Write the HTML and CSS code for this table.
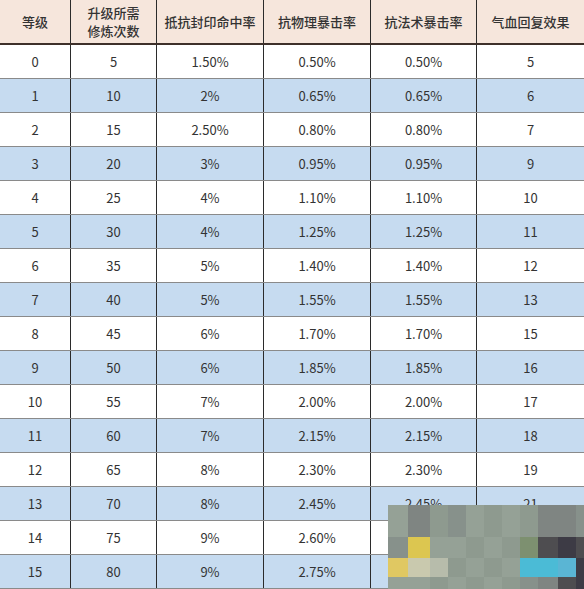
FILE: index.html
```html
<!DOCTYPE html>
<html lang="zh">
<head>
<meta charset="utf-8">
<link rel="stylesheet" href="styles.css">
</head>
<body>
<div class="table">
  <div class="row head">
    <div class="cell">等级</div>
    <div class="cell">升级所需<br>修炼次数</div>
    <div class="cell">抵抗封印命中率</div>
    <div class="cell">抗物理暴击率</div>
    <div class="cell">抗法术暴击率</div>
    <div class="cell">气血回复效果</div>
  </div>
  <div class="row"><div class="cell">0</div><div class="cell">5</div><div class="cell">1.50%</div><div class="cell">0.50%</div><div class="cell">0.50%</div><div class="cell">5</div></div>
  <div class="row alt"><div class="cell">1</div><div class="cell">10</div><div class="cell">2%</div><div class="cell">0.65%</div><div class="cell">0.65%</div><div class="cell">6</div></div>
  <div class="row"><div class="cell">2</div><div class="cell">15</div><div class="cell">2.50%</div><div class="cell">0.80%</div><div class="cell">0.80%</div><div class="cell">7</div></div>
  <div class="row alt"><div class="cell">3</div><div class="cell">20</div><div class="cell">3%</div><div class="cell">0.95%</div><div class="cell">0.95%</div><div class="cell">9</div></div>
  <div class="row"><div class="cell">4</div><div class="cell">25</div><div class="cell">4%</div><div class="cell">1.10%</div><div class="cell">1.10%</div><div class="cell">10</div></div>
  <div class="row alt"><div class="cell">5</div><div class="cell">30</div><div class="cell">4%</div><div class="cell">1.25%</div><div class="cell">1.25%</div><div class="cell">11</div></div>
  <div class="row"><div class="cell">6</div><div class="cell">35</div><div class="cell">5%</div><div class="cell">1.40%</div><div class="cell">1.40%</div><div class="cell">12</div></div>
  <div class="row alt"><div class="cell">7</div><div class="cell">40</div><div class="cell">5%</div><div class="cell">1.55%</div><div class="cell">1.55%</div><div class="cell">13</div></div>
  <div class="row"><div class="cell">8</div><div class="cell">45</div><div class="cell">6%</div><div class="cell">1.70%</div><div class="cell">1.70%</div><div class="cell">15</div></div>
  <div class="row alt"><div class="cell">9</div><div class="cell">50</div><div class="cell">6%</div><div class="cell">1.85%</div><div class="cell">1.85%</div><div class="cell">16</div></div>
  <div class="row"><div class="cell">10</div><div class="cell">55</div><div class="cell">7%</div><div class="cell">2.00%</div><div class="cell">2.00%</div><div class="cell">17</div></div>
  <div class="row alt"><div class="cell">11</div><div class="cell">60</div><div class="cell">7%</div><div class="cell">2.15%</div><div class="cell">2.15%</div><div class="cell">18</div></div>
  <div class="row"><div class="cell">12</div><div class="cell">65</div><div class="cell">8%</div><div class="cell">2.30%</div><div class="cell">2.30%</div><div class="cell">19</div></div>
  <div class="row alt"><div class="cell">13</div><div class="cell">70</div><div class="cell">8%</div><div class="cell">2.45%</div><div class="cell">2.45%</div><div class="cell">21</div></div>
  <div class="row"><div class="cell">14</div><div class="cell">75</div><div class="cell">9%</div><div class="cell">2.60%</div><div class="cell">2.60%</div><div class="cell">22</div></div>
  <div class="row alt"><div class="cell">15</div><div class="cell">80</div><div class="cell">9%</div><div class="cell">2.75%</div><div class="cell">2.75%</div><div class="cell">24</div></div>

  <div class="mosaic">
    <span class="g2"></span><span class="g4"></span><span class="g1"></span><span class="g3"></span><span class="g2"></span><span class="g1"></span><span class="g2"></span><span class="g1"></span><span class="g4"></span><span class="g4"></span><span class="g3"></span>
    <span class="g3"></span><span class="y1"></span><span class="g2"></span><span class="g2"></span><span class="g1"></span><span class="g2"></span><span class="g1"></span><span class="g6"></span><span class="d1"></span><span class="d2"></span><span class="d1"></span>
    <span class="y2"></span><span class="y3"></span><span class="g5"></span><span class="g1"></span><span class="g2"></span><span class="g1"></span><span class="g2"></span><span class="c1"></span><span class="c1"></span><span class="c2"></span><span class="d2"></span>
    <span class="g2"></span><span class="g2"></span><span class="g1"></span><span class="g2"></span><span class="g1"></span><span class="g2"></span><span class="g1"></span><span class="g3"></span><span class="g4"></span><span class="d1"></span><span class="d2"></span>
  </div>
</div>
</body>
</html>
```
FILE: styles.css
```css
* { box-sizing: border-box; }
html, body { margin: 0; padding: 0; background: #fff; }
body {
  font-family: "Noto Sans CJK SC", "Noto Sans", sans-serif;
  font-size: 13px;
  color: #333;
}
.table {
  position: relative;
  width: 584px;
  height: 589px;
  overflow: hidden;
}
.row {
  display: grid;
  grid-template-columns: 71px 86px 107px 107px 106px 107px;
  height: 34px;
  border-bottom: 1px solid #8a8a8a;
  background: #fff;
}
.row.alt { background: #c6dbf0; }
.row.head {
  height: 45px;
  background: #f6e6dc;
  border-bottom: 2px solid #3e302a;
  font-weight: 500;
  line-height: 18px;
}
.cell {
  display: flex;
  align-items: center;
  justify-content: center;
  text-align: center;
  border-right: 1px solid #2b2b2b;
}
.cell:last-child { border-right: none; }

.mosaic {
  position: absolute;
  left: 388px;
  top: 505px;
  width: 196px;
  display: grid;
  grid-template-columns: 20px 22px 18px 18px 18px 18px 18px 18px 20px 18px 8px;
  grid-template-rows: 32px 21px 19px 12px;
}
.mosaic span { display: block; }
.g1 { background: #8e9a8f; }
.g2 { background: #95a196; }
.g3 { background: #87918b; }
.g4 { background: #7f8582; }
.g5 { background: #b7bcab; }
.g6 { background: #7d9070; }
.y1 { background: #dcc650; }
.y2 { background: #e0c862; }
.y3 { background: #c9c9ae; }
.c1 { background: #4bbbd6; }
.c2 { background: #5ab5d4; }
.d1 { background: #4e4d50; }
.d2 { background: #3d3b45; }
```
